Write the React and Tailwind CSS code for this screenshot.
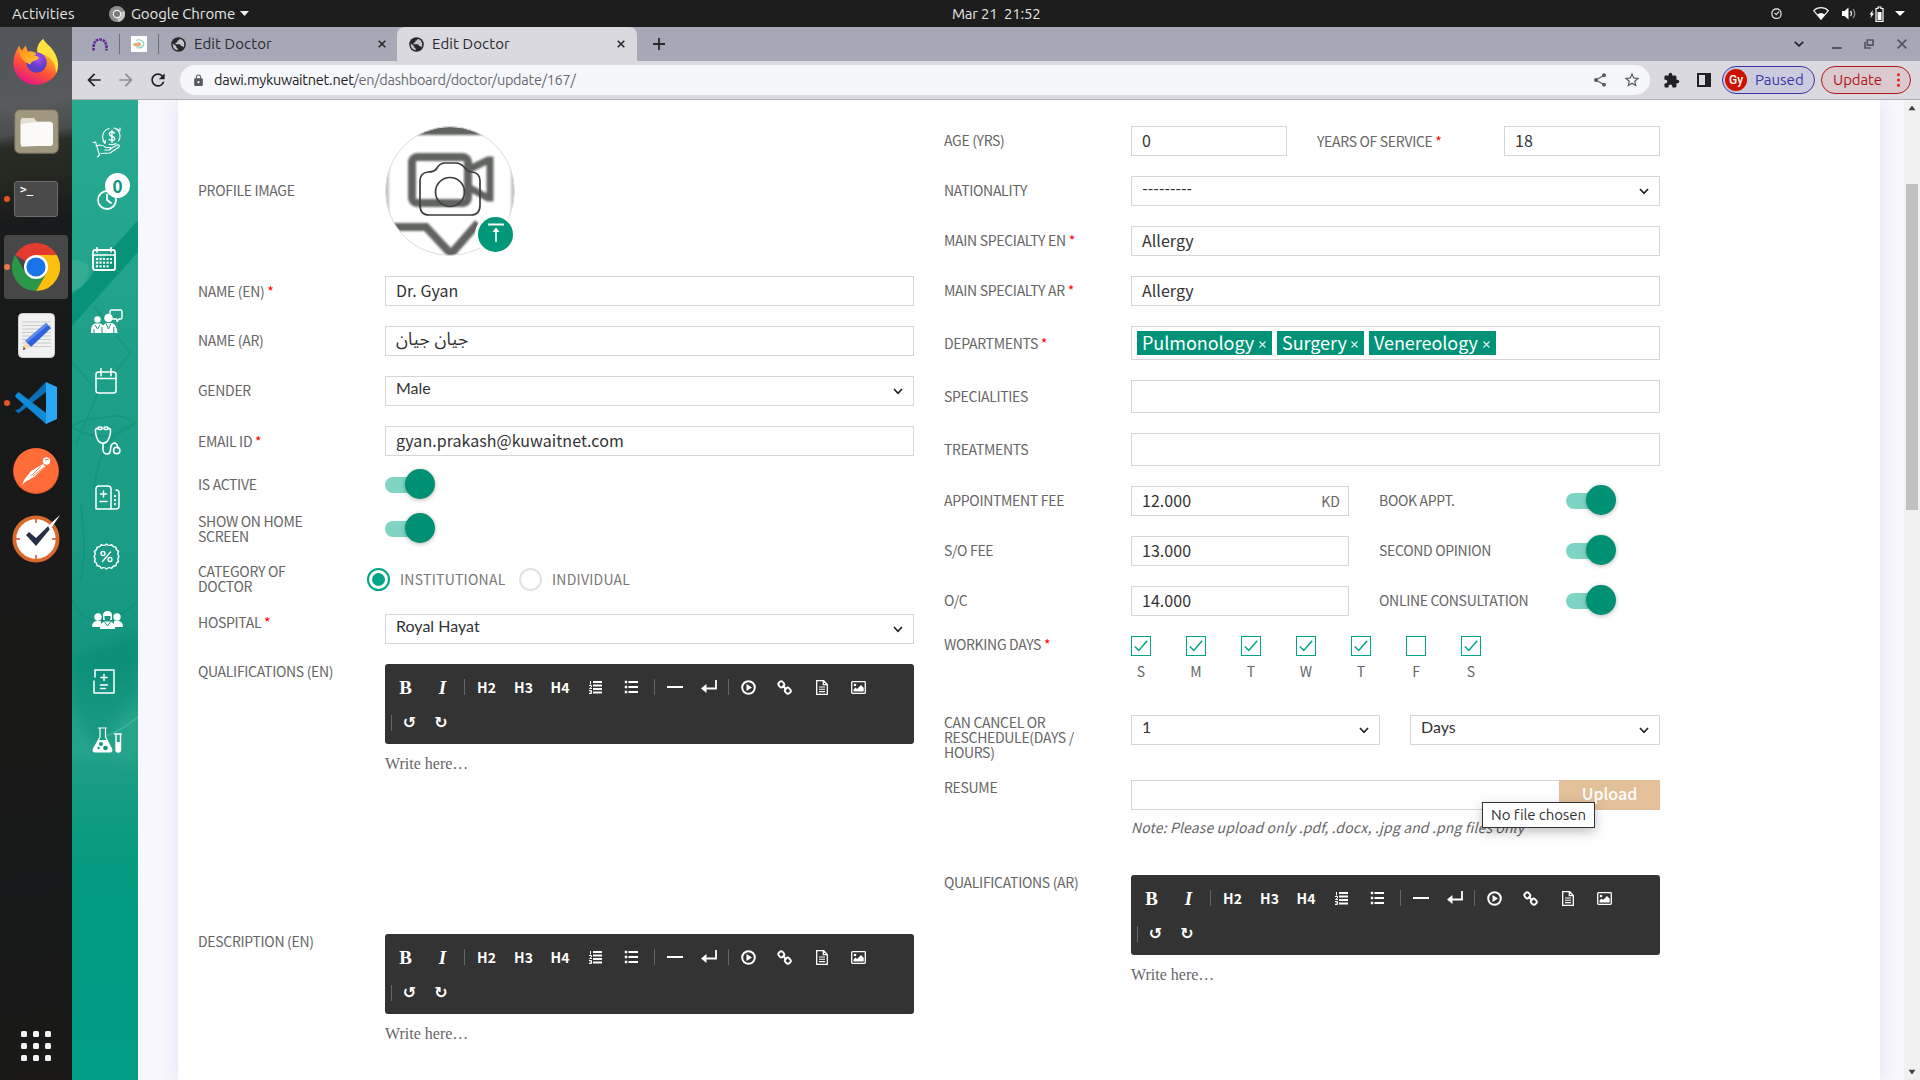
import React from "react";
import { MdArrowBack, MdArrowForward, MdRefresh, MdLock, MdShare, MdStarBorder, MdExtension } from "react-icons/md";

const UI = "font-['Ubuntu','Noto_Sans',sans-serif]";
const FORM = "font-['Source_Sans_Pro','Noto_Sans_CJK_SC',sans-serif]";

/* ---------- desktop top bar ---------- */

function TopBar() {
  return (
    <header className={`${UI} flex h-[27px] items-center bg-[#1d1d1d] text-[15px] leading-[27px] text-[#e6e6e6]`}>
      <span className="ml-3 w-[97px] tracking-[0.1px]">Activities</span>
      <svg className="size-4" viewBox="0 0 16 16">
        <circle cx="8" cy="8" r="8" fill="#8d8d8d" />
        <path d="M8 8 15.5 5A8 8 0 0 1 9 16Z" fill="#c4c4c4" />
        <circle cx="8" cy="8" r="4.2" fill="#f1f1f1" />
        <circle cx="8" cy="8" r="3" fill="#777" />
      </svg>
      <span className="ml-1.5 w-[109px] whitespace-nowrap tracking-[-0.08px]">Google Chrome</span>
      <svg className="h-[5px] w-[9px]" viewBox="0 0 9 5"><path d="M0 0h9L4.500 5z" fill="#eee" /></svg>
      <span className="ml-[703px] whitespace-pre tracking-[-0.2px]">Mar 21  21:52</span>
      <div className="ml-auto flex items-center pr-[15px]">
        <svg className="mr-[31px] size-[11px]" viewBox="0 0 11 11" fill="none" stroke="#d6d6d6"><rect x="1" y="1" width="9" height="9.500" rx="4" strokeWidth="1.300" /><path d="m3.500 5 1.800 1.600L8 3.500" strokeWidth="1.200" /></svg>
        <svg className="mr-[12px] h-[13px] w-4" viewBox="0 0 16 13"><path d="M8 .7c3 0 5.500 1.100 7.300 2.900L8 12.300.7 3.600C2.500 1.800 5 .7 8 .7Z" fill="none" stroke="#eee" strokeWidth="1.200" /><path d="M4.200 7.500a6 6 0 0 1 7.600 0L8 12.300z" fill="#fff" /></svg>
        <svg className="mr-[12px] h-[13px] w-4" viewBox="0 0 16 13"><path d="M1 4h2.500L7.500.500v12L3.500 9H1z" fill="#fff" /><path d="M9.500 4q2 2.500 0 5" fill="none" stroke="#eee" strokeWidth="1.300" /><path d="M12 2q3.600 4.500 0 9" fill="none" stroke="#999" strokeWidth="1.200" /></svg>
        <svg className="mr-[11px] h-4 w-[15px]" viewBox="0 0 15 16"><path d="M4 4 .5 8.500h1.800L1.500 12 5 7.500H3.200z" fill="#fff" /><path d="M7 2.500h2V1h3v1.500h2v12.800H7z" fill="none" stroke="#fff" strokeWidth="1.200" /><path d="M8.500 6h4v8h-4z" fill="#fff" /></svg>
        <svg className="h-[5px] w-[10px]" viewBox="0 0 10 5"><path d="M0 0h10L5 5z" fill="#fff" /></svg>
      </div>
    </header>
  );
}

/* ---------- dock ---------- */

const FirefoxIcon = () => (
  <svg className="-mt-1 size-[47px]" viewBox="0 0 48 48">
    <defs>
      <linearGradient id="fxBody" x1=".8" y1="0" x2=".3" y2="1"><stop offset="0" stopColor="#fff14f" /><stop offset=".35" stopColor="#ffa22a" /><stop offset=".65" stopColor="#ff5136" /><stop offset="1" stopColor="#e2128c" /></linearGradient>
      <radialGradient id="fxCore" cx=".6" cy=".3"><stop offset="0" stopColor="#a94df0" /><stop offset="1" stopColor="#5b3ec4" /></radialGradient>
      <linearGradient id="fxHead" x1="0" y1="0" x2="1" y2="1"><stop offset="0" stopColor="#ff8a16" /><stop offset="1" stopColor="#ffc53a" /></linearGradient>
    </defs>
    <path d="M31 1c2 5 6 6 10 12 8 12 6 24-3 30-9 7-22 6-30-1C-1 34-1 23 3 14l3-6 3 5 4-5 2 6 10 1c-1-6 2-11 6-14Z" fill="url(#fxBody)" />
    <path d="M31 1c2 5 6 6 10 12 6 9 6 17 3 23 0-9-4-15-10-18-4-2-9-3-9-3-1-6 2-11 6-14Z" fill="#ffe23d" />
    <circle cx="24" cy="25" r="10.500" fill="url(#fxCore)" />
    <path d="M6 9l3 4 4-5 2 6c4-1 7 0 9 3l-3 1c4 0 6 1 5 3-2 3-8 2-8 6-5-1-12-6-12-18Z" fill="url(#fxHead)" />
  </svg>
);

const FilesIcon = () => (
  <svg className="h-[45px] w-[45px]" viewBox="0 0 45 45">
    <rect x=".7" y=".7" width="43.600" height="43.600" rx="5" fill="#a0977f" stroke="#6d6757" />
    <path d="M7 38V11q0-2 2-2h10l3 3.500h14q2 0 2 2V36z" fill="#e0dccf" />
    <rect x="6.500" y="13" width="32.500" height="24" rx="3" fill="#fbfaf9" />
    <path d="M6.500 15V12q0-3 3-3H20l3 4z" fill="#e3ded3" />
  </svg>
);

const ChromeIcon = () => (
  <svg className="size-[48px]" viewBox="0 0 48 48">
    <path d="M24 24 3.200 12A24 24 0 0 1 44.800 12Z" fill="#e33b2e" />
    <path d="M24 12H44.800A24 24 0 0 1 24 48L34.400 30Z" fill="#fdbf0d" />
    <path d="M13.600 30 3.200 12A24 24 0 0 0 24 48L34.400 30Z" fill="#2a9848" />
    <circle cx="24" cy="24" r="12" fill="#fff" /><circle cx="24" cy="24" r="9.600" fill="#1a73e8" />
  </svg>
);

const EditorIcon = () => (
  <svg className="h-[45px] w-[37px]" viewBox="0 0 37 45">
    <rect x=".5" y=".5" width="36" height="44" rx="4" fill="#f1f1f1" stroke="#d0d0d0" />
    <path d="M4 9h29M4 12.500h29M4 16h29M4 19.500h29M4 23h29M4 26.500h29M4 30h29M4 33.500h29" stroke="#c9c9c9" />
    <path d="m7 28 21-18 5 5-20 19z" fill="#2f62d9" /><path d="m7 28 21-18 2 2L9 30z" fill="#5c8af0" />
    <path d="m7 28-2 9 8-3z" fill="#f8d8ad" /><path d="m5.700 34-.7 3 2.600-1z" fill="#333" />
  </svg>
);

const CodeIcon = () => (
  <svg className="size-[42px]" viewBox="0 0 42 42">
    <path d="m0 28 3.500 3.500L31 10V0L4 27z" fill="#0b6fb8" />
    <path d="M0 13.500 3.500 10 31 31v11L1 15.500z" fill="#0e8ad6" />
    <path d="M31 0 42 5v32l-11 5z" fill="#2aa7f3" />
  </svg>
);

const PostmanIcon = () => (
  <svg className="size-[46px]" viewBox="0 0 46 46">
    <circle cx="23" cy="23" r="23" fill="#e4582a" /><circle cx="23" cy="22.500" r="22.300" fill="#ff6c37" />
    <circle cx="33.500" cy="13" r="3.700" fill="#fff" /><path d="m32 12 4-1" stroke="#ff6c37" />
    <path d="m30 16 2.500 2.500L21 29l-9 5-3 3 2-5 7-9z" fill="#fff" /><path d="m28 18-10 10m13-9L20 28" stroke="#ff6c37" strokeWidth=".8" />
  </svg>
);

const TaskClockIcon = () => (
  <svg className="size-[48px]" viewBox="0 0 48 48">
    <circle cx="24" cy="24" r="23" fill="#fff" stroke="#d9692b" strokeWidth="4" transform="translate(1.400 1.400) scale(.94)" />
    <path d="M24 4v4M24 40v4M4 24h4M40 24h4" stroke="#d14b2b" strokeWidth="1.500" />
    <path d="m14 20 3-3 7 6L47 .5 48 2 24 31z" fill="#272e45" /><path d="m36 11 12-11-10 15z" fill="#fff" />
  </svg>
);

const TerminalIcon = () => (
  <div className="h-[36px] w-[44px] rounded-[3px] border border-[#6b6b6b] bg-[#4a4a4a] pl-[5px] pt-px font-['DejaVu_Sans_Mono',monospace] text-[11px] font-bold leading-[14px] text-white">&gt;_</div>
);

function Dock() {
  const items = [
    [FirefoxIcon, false], [FilesIcon, false], [TerminalIcon, true], [ChromeIcon, true], [EditorIcon, false],
    [CodeIcon, true], [PostmanIcon, false], [TaskClockIcon, false],
  ];
  return (
    <aside className="flex w-[72px] shrink-0 flex-col bg-[linear-gradient(172deg,#515459_0px,#57595b_80px,#4b4d4f_108px,#2a2d26_120px,#23261f_160px,#191a1b_195px,#171818_420px,#191917_700px,#17191a_850px,#1a1917_1053px)] pt-0.5">
      {items.map(([Icon, running], i) => (
        <div key={i} className="flex h-[68px] items-center">
          <span className={running ? "ml-1 -mr-1 size-1.5 shrink-0 rounded-full bg-[#e95420]" : "ml-1 -mr-1 size-1.5 shrink-0"} />
          <div className={i === 3 ? "-ml-0.5 flex size-16 items-center justify-center rounded-[4px] bg-white/20" : "-ml-0.5 flex size-16 items-center justify-center"}><Icon /></div>
        </div>
      ))}
      <div className="mx-auto mb-[19px] mt-auto grid grid-cols-3 gap-1.5">
        {Array.from({ length: 9 }, (_, i) => <span key={i} className="size-1.5 rounded-[1.500px] bg-[#f2f2f2]" />)}
      </div>
    </aside>
  );
}

/* ---------- browser chrome ---------- */

const X = ({ className = "" }) => <svg className={`size-2 ${className}`} viewBox="0 0 8 8"><path d="m.7.700 6.600 6.600M7.300.700.700 7.300" stroke="currentColor" strokeWidth="1.600" /></svg>;

const Globe = () => (
  <svg className="size-[15px]" viewBox="0 0 15 15">
    <circle cx="7.500" cy="7.500" r="7.300" fill="currentColor" />
    <path d="M8.800 1.700Q8.500 3.500 6.600 3.600L6.200 5.200 4.500 6v1.300h4.200q1.200.2 1.200 1.600h1.300l1.200 1.700Q13.900 8.500 13 5.500 11.800 2.500 8.800 1.700ZM1.700 6.500Q1.200 12 6.700 13.300v-1.600l-1.500-1.500V9.300z" fill="currentColor" className="text-[#c4c4ce]" />
  </svg>
);

function TabStrip() {
  return (
    <div className="flex h-[34px] items-center bg-[#a6a8b8] text-[#27282c]">
      <svg className="ml-5 h-[13px] w-4" viewBox="0 0 16 13"><path d="M1.500 12.500v-3Q2 1.500 8 1.500t6.500 8v3" fill="none" stroke="#5f2b96" strokeWidth="2.600" strokeDasharray="2.600 .8" /></svg>
      <span className="ml-[11px] h-5 w-px bg-[#6c6e7a]" />
      <svg className="ml-[11px] size-4" viewBox="0 0 16 16"><path d="M0 0h16v16H0z" fill="#fff" /><path d="M5 4.500Q8 2.800 11 5t1 5q-2.500 3-6.500 1.500" fill="none" stroke="#7fd6c4" strokeWidth="1.200" /><path d="M1.500 8.500Q3 6.500 5.500 7 8 5.500 10 7.500q.5 2.500-2 3-3.500 1-6.500-2Z" fill="#e0ad7c" /></svg>
      <span className="ml-[11px] h-5 w-px bg-[#6c6e7a]" />
      <div className="flex w-[238px] items-center pl-[12px]">
        <Globe />
        <span className="ml-[8px] text-[15px] tracking-[0.1px]">Edit Doctor</span>
        <X className="ml-auto mr-[11px]" />
      </div>
      <div className="flex h-[34px] w-[240px] items-center rounded-t-lg bg-[#dad9e0] pl-3">
        <Globe />
        <span className="ml-[8px] text-[15px] tracking-[0.1px]">Edit Doctor</span>
        <X className="ml-auto mr-3" />
      </div>
      <svg className="ml-4 size-3" viewBox="0 0 12 12"><path d="M6 0v12M0 6h12" stroke="currentColor" strokeWidth="1.800" /></svg>
      <svg className="ml-auto mr-[28px] h-[6px] w-[10px]" viewBox="0 0 10 6"><path d="m.8.800 4.200 4 4.200-4" fill="none" stroke="currentColor" strokeWidth="1.800" /></svg>
      <span className="mr-[22px] mt-2 h-0.5 w-2.5 bg-[#55565f]" />
      <svg className="mr-[23px] size-2.5" viewBox="0 0 10 10" fill="none" stroke="#55565f" strokeWidth="1.700"><path d="M3.300 1h5.700v5.200H3.300z" /><path d="M1 3v6h6" /></svg>
      <svg className="mr-[13px] size-2.5" viewBox="0 0 10 10"><path d="m.7.700 8.600 8.600M9.300.700.700 9.300" stroke="#55565f" strokeWidth="1.800" /></svg>
    </div>
  );
}

function Toolbar() {
  return (
    <div className="flex h-[39px] items-center border-b border-[#afafb4] bg-[#dad9e0] text-[#202124]">
      <MdArrowBack className="ml-3 size-5" />
      <MdArrowForward className="ml-3 size-5 text-[#8c8c92]" />
      <MdRefresh className="ml-3 size-5" />
      <div className="ml-3 flex h-[30px] w-[1470px] items-center rounded-full bg-[#f6f7fa] pl-3 pr-[9px]">
        <MdLock className="size-[13px] text-[#55585e]" />
        <span className="ml-[9px] text-[14.5px] tracking-[-0.27px] text-[#202124]">dawi.mykuwaitnet.net<span className="text-[#666a70]">/en/dashboard/doctor/update/167/</span></span>
        <MdShare className="ml-auto size-4 text-[#55585e]" />
        <MdStarBorder className="ml-[15px] size-[18px] text-[#55585e]" />
      </div>
      <MdExtension className="ml-[13px] size-[17px]" />
      <svg className="ml-[17px] size-3.5 shrink-0" viewBox="0 0 14 14"><path d="M0 0h14v14H0z" fill="#202124" /><path d="M2 2h6v10H2z" fill="#dad9e0" /></svg>
      <div className="ml-[11px] flex h-7 w-[93px] items-center rounded-full border border-[#3c35a8] bg-[#cacbdc] pl-0.5 text-[15px] text-[#3c35a8]">
        <span className="flex size-[22px] items-center justify-center rounded-full bg-[#cc1100] font-['Roboto',sans-serif] text-[12px] font-medium text-white">Gy</span>
        <span className="ml-2">Paused</span>
      </div>
      <div className="ml-1.5 flex h-7 w-[90px] items-center rounded-full border border-[#b3151b] bg-[#dac9cd] pl-[11px] text-[15px] text-[#b3151b]">
        <span className="tracking-[-0.1px]">Update</span>
        <svg className="ml-auto mr-[10px] h-[14px] w-[3px]" viewBox="0 0 3 14" fill="#e8201a"><circle cx="1.500" cy="1.700" r="1.500" /><circle cx="1.500" cy="7" r="1.500" /><circle cx="1.500" cy="12.300" r="1.500" /></svg>
      </div>
    </div>
  );
}

/* ---------- application sidebar ---------- */

const line = { fill: "none", stroke: "#fff", strokeWidth: 1.5, strokeLinecap: "round", strokeLinejoin: "round" };

const MoneyHand = () => (
  <svg className="h-[31px] w-[30px]" viewBox="0 0 30 31" {...line} strokeWidth="1.100">
    <path d="M13 15.500A8.500 8.500 0 0 1 17 1.500M22 1A8.500 8.500 0 0 1 26.500 14M24 16.500a8.500 8.500 0 0 1-7 .8" /><path d="m25 2 3 2v-3M11 14l2 2.500.5-3" />
    <path d="M22.500 6Q21 4.700 19 5q-2 .5-1.500 2.300Q18 9 20.300 9.500t2.400 2.300q-.4 1.900-2.500 1.800-2 0-3-1.200M20 3.500v12" strokeWidth="1.400" />
    <path d="m1 15.500 2.500-.5 4 13-2 2M4 19l4-1q3 0 6 2.500h4q2 1.500-.5 2.500H13M18 22l7-4q3-.5 2 2l-9 6-9 .5" />
  </svg>
);
const Clock = () => (
  <div className="relative size-5">
    <svg className="size-5" viewBox="0 0 20 20" {...line} strokeWidth="1.800"><circle cx="10" cy="10" r="9" /><path d="M10 4.500V10l4 3" /></svg>
    <span className="absolute -top-[17px] left-2 flex size-[25px] items-center justify-center rounded-full bg-white font-['Noto_Sans_CJK_SC',sans-serif] text-[17px] font-bold leading-none text-[#06957c]">0</span>
  </div>
);
const CalendarGrid = () => (
  <svg className="size-6" viewBox="0 0 24 24" {...line}><rect x="1" y="3" width="22" height="20" rx="2" strokeWidth="1.800" /><path d="M1 8h22M5 .8v4M19 .8v4" strokeWidth="1.700" /><path d="M4 12h16M4 15.700h16M4 19.300h13" strokeWidth="2.200" strokeDasharray="2.200 1.300" strokeLinecap="butt" /></svg>
);
const PeopleChat = () => (
  <svg className="h-6 w-8" viewBox="0 0 32 24"><path d="M19 5V2.500Q19 1 20.500 1h9Q31 1 31 2.500v6q0 1.500-1.500 1.500H28l-2 2.500-.5-2.500H22" {...line} strokeWidth="1.400" /><circle cx="6.500" cy="10.500" r="3.200" fill="#fff" /><circle cx="17.500" cy="9" r="4.300" fill="#fff" /><path d="M0 24q-.5-8.500 4-9.500h5q2 0 3 2l3-2.500h6q4.500 1 5.500 10z" fill="#fff" /><path d="m4 16 2.500 4L9 16M15 14.500l2.500 5.500 2.500-5.500M11 18v6M3 20v4M22.800 18v6" stroke="#1a9a84" fill="none" /></svg>
);
const CalendarPlain = () => (
  <svg className="h-[26px] w-[22px]" viewBox="0 0 22 26" {...line}><rect x="1" y="4" width="20" height="21" rx="2.500" /><path d="M1 10.500h20M6 .8v7M16 .8v7" /></svg>
);
const Stethoscope = () => (
  <svg className="h-[29px] w-[27px]" viewBox="0 0 27 29" {...line} strokeWidth="1.600"><rect x="4" y="1" width="4" height="2.500" rx="1" /><rect x="10" y="1" width="4" height="2.500" rx="1" /><path d="M4 2.200Q1 2 1.500 6q.8 7 4 10 3.500 2.500 7 0 3.200-3 4-10 .3-4-2.500-3.800M9 17.500V24q.5 4 4 4 3.700 0 3.500-5 .5-6 4-6 3 .5 3.200 5" /><circle cx="22.700" cy="24.500" r="3.200" /></svg>
);
const HospitalDoc = () => (
  <svg className="size-[25px]" viewBox="0 0 25 25" {...line}><path d="M1 24V4q0-3 3-3h9q3 0 3 3v20zM21 5q3 0 3 3v13q0 3-3 3h-5M8.500 6v6M5.500 9h6M5 16.500h7" /><path d="M20 11v9" strokeWidth="2.200" strokeDasharray=".2 3.800" /></svg>
);
const Percent = () => (
  <svg className="size-[27px]" viewBox="0 0 27 27" {...line} strokeWidth="1.300"><path d="M13.500 1Q15.700 3.500 18.700 1.600 19.900 4.500 23 4.200 22.800 7.300 25.600 8.300 23.800 11 26 13.500 23.800 16 25.600 18.700 22.800 19.700 23 22.800 19.900 22.500 18.700 25.400 15.700 23.500 13.500 26 11.300 23.500 8.300 25.400 7.100 22.500 4 22.800 4.200 19.700 1.400 18.700 3.200 16 1 13.500 3.200 11 1.400 8.300 4.200 7.300 4 4.200 7.100 4.500 8.300 1.600 11.300 3.500 13.500 1Z" /><circle cx="10" cy="10.500" r="2" /><circle cx="17" cy="16.500" r="2" /><path d="m17.500 9-8 9.500" /></svg>
);
const Group = () => (
  <svg className="h-[18px] w-[31px]" viewBox="0 0 31 18"><circle cx="6" cy="6" r="3.700" fill="#fff" /><circle cx="25" cy="6" r="3.700" fill="#fff" /><path d="M0 16q0-5 4-6h5v6zM31 16q0-5-4-6h-5v6z" fill="#fff" /><path d="M11 9V4.500Q11 0 15.500 0T20 4.500V9z" fill="#fff" /><path d="M12.500 5h6v2q-.3 3-3 3t-3-3z" fill="#129580" /><path d="M8 18q0-7 5-7.500h5q5 .5 5 7.500z" fill="#fff" /><path d="m12.500 11 3 4 3-4" stroke="#129580" fill="none" /></svg>
);
const DocPlus = () => (
  <svg className="h-[25px] w-[22px]" viewBox="0 0 22 25" {...line}><path d="M2 8V1h19v23H1V12M11 5.500v6M8 8.500h6M7.500 16h7M7.500 19.500h5" /></svg>
);
const Flask = () => (
  <svg className="h-[26px] w-[30px]" viewBox="0 0 30 26"><path d="M6.500 1h8M8 1.500V10L1.500 22q-1 3 1.500 3h15q2.500 0 1.500-3L13.500 10V1.500" {...line} strokeWidth="1.200" /><path d="M6.500 13h8.500l5 9q.8 3-2 3H3q-2.800 0-2-3z" fill="#fff" /><circle cx="9" cy="17" r="2" fill="#12967e" /><circle cx="13.500" cy="21" r="2.300" fill="#12967e" /><circle cx="6.500" cy="21" r="1.200" fill="#12967e" /><path d="M22.500 7h7.500M24 7.500V23q0 2 2.200 2t2.300-2V7.500" {...line} strokeWidth="1.400" /><path d="M24 15h4.500v8q0 2-2.300 2T24 23z" fill="#fff" /></svg>
);

function AppSidebar() {
  const icons = [
    [MoneyHand, "mt-[27px]"], [Clock, "mt-[32px]"], [CalendarGrid, "mt-[37px] -ml-1.5"], [PeopleChat, "mt-[38px]"], [CalendarPlain, "mt-[35px] -ml-[3px]"],
    [Stethoscope, "mt-[32px]"], [HospitalDoc, "mt-[30px]"], [Percent, "mt-[33px] -ml-0.5"], [Group, "mt-[41px]"], [DocPlus, "mt-[40px] -ml-[7px]"], [Flask, "mt-[33px]"],
  ];
  return (
    <nav className="relative flex w-[66px] shrink-0 flex-col items-center overflow-hidden bg-[linear-gradient(180deg,#29ab93_0px,#25a78f_100px,#1ea188_250px,#1a9b84_450px,#139580_560px,#25a38b_620px,#199d84_680px,#089b81_740px,#029c83_820px,#019d84_980px)]">
      <svg className="absolute left-0 top-0 h-[800px] w-[66px]" viewBox="0 0 66 800">
        <defs><filter id="haze" x="-20%" width="140%"><feGaussianBlur stdDeviation="6" /></filter></defs>
        <path d="M66 120v32L0 226v-35q14-3 24-24z" fill="#018c74" opacity=".75" />
        <path d="M0 160q18 0 17 12T0 194z" fill="#46b59c" opacity=".45" />
        <path d="M0 262 26 292 4 345M22 206l36 47-20 27M0 326q12-8 30-8 20-6 34 5-30 25-64 4M64 323q-36 10-42 66M8 402q8 50 0 80M0 500q18 40 66 2" fill="none" stroke="#0b806b" strokeWidth="1.500" opacity=".3" />
        <g filter="url(#haze)">
          <path d="M0 560 66 530v60L26 646 0 610z" fill="#00856e" opacity=".38" />
          <path d="M0 640q40 20 66-20v50Q30 650 0 662z" fill="#39ad95" opacity=".3" />
        </g>
        <path d="M34 636q18-7 32-19" stroke="#63bfab" strokeWidth="2" opacity=".45" fill="none" />
      </svg>
      {icons.map(([Icon, cls], i) => <div key={i} className={`relative flex w-[30px] shrink-0 translate-x-[2px] justify-center ${cls}`}><span className="shrink-0"><Icon /></span></div>)}
    </nav>
  );
}

/* ---------- form controls ---------- */

const Label = ({ children, req, className = "" }) => (
  <div className={`w-[187px] shrink-0 whitespace-pre text-[14px] leading-[15px] tracking-[-0.31px] text-[#666] ${className}`}>
    {children}{req && <span className="text-[#f00]"> *</span>}
  </div>
);

const Input = ({ children, className = "w-[529px]", tall }) => (
  <div className={`flex shrink-0 items-center border border-[#d6d6d6] bg-white px-2.5 pb-0.5 text-[16px] leading-5 tracking-[0.04px] text-[#333] ${tall || "h-[30px]"} ${className}`}>{children}</div>
);

const Select = ({ children, className = "w-[529px]" }) => (
  <div className={`flex h-[30px] shrink-0 justify-between border border-[#d6d6d6] bg-white pl-2.5 pr-[10px] font-['Lato',sans-serif] text-[16px] leading-[22px] text-[#333] ${className}`}>
    <span>{children}</span>
    <svg className="mt-[11px] h-[7px] w-[10px]" viewBox="0 0 10 7"><path d="m1 1 4 4.300L9 1" fill="none" stroke="#222" strokeWidth="1.700" /></svg>
  </div>
);

const Toggle = ({ className = "" }) => (
  <div className={`relative h-[30px] w-[50px] shrink-0 ${className}`}>
    <div className="mt-2 h-4 w-10 rounded-full bg-[#7fd5c3]" />
    <div className="absolute right-0 top-0 size-[30px] rounded-full bg-[#009073] shadow-[0_1px_4px_rgba(0,0,0,0.3)]" />
  </div>
);

const Row = ({ h, children }) => <div className={`flex items-start ${h}`}>{children}</div>;

const Sep = ({ w }) => <span className={`flex h-4 shrink-0 justify-center ${w}`}><span className="h-4 w-px bg-[#666]" /></span>;
const Btn = ({ w = "w-[37px]", className = "", children }) => <span className={`flex shrink-0 items-center justify-center ${w} ${className}`}>{children}</span>;
const heading = "text-[14px] font-bold leading-none";
const serif = "font-['Liberation_Serif',serif] text-[19px] font-bold leading-none";

const glyph = { className: "h-[14px] w-[15px]", viewBox: "0 0 15 14", fill: "none", stroke: "#fff", strokeWidth: 2 };

function Editor() {
  return (
    <div className="w-[529px]">
      <div className="h-20 rounded-[3px] bg-[#333] pl-0.5 pt-[13px] text-white">
        <div className="flex h-5 items-center">
          <Btn className={serif}>B</Btn><Btn className={`${serif} italic`}>I</Btn><Sep w="w-[7px]" />
          <Btn className={heading}>H2</Btn><Btn className={heading}>H3</Btn><Btn w="w-9" className={heading}>H4</Btn>
          <Btn w="w-[35px]"><svg {...glyph}><path d="M5 2h9M5 5.500h9M5 9h9M5 12.500h9" strokeWidth="1.800" /><path d="M2.500 1v3.500M1 5.500h2.500v1.500L1.500 8.500H4M1 10.500h2.500v3H1M1.500 12h2" strokeWidth="1" /></svg></Btn>
          <Btn><svg {...glyph}><path d="M4.500 2H14M4.500 7H14M4.500 12H14" strokeWidth="2.200" /><path d="M.8 2h2.400M.8 7h2.400M.8 12h2.400" strokeWidth="2.400" /></svg></Btn><Sep w="w-2" />
          <Btn w="w-[34px]"><span className="h-0.5 w-4 bg-white" /></Btn>
          <Btn w="w-[34px]"><svg className="h-3.5 w-4" viewBox="0 0 16 14"><path d="M15 0v8.500H4" fill="none" stroke="#fff" strokeWidth="1.800" /><path d="M5.500 4v9L0 8.500z" fill="#fff" /></svg></Btn>
          <Sep w="w-1" />
          <Btn w="w-9"><svg className="size-[15px]" viewBox="0 0 15 15"><circle cx="7.500" cy="7.500" r="6.300" fill="none" stroke="#fff" strokeWidth="2" /><path d="m5.500 4 5.500 3.500L5.500 11z" fill="#fff" /></svg></Btn>
          <Btn><svg className="size-[15px]" viewBox="0 0 15 15" fill="none" stroke="#fff" strokeWidth="1.900"><rect x="1.700" y="1.500" width="5.200" height="5.800" rx="2.300" transform="rotate(-42 4.300 4.400)" /><rect x="8.200" y="7.800" width="5.200" height="5.800" rx="2.300" transform="rotate(-42 10.800 10.700)" /><path d="m5.500 5.500 4 4.200" /></svg></Btn>
          <Btn><svg className="h-[15px] w-3" viewBox="0 0 12 15" fill="none" stroke="#fff" strokeWidth="1.300"><path d="M.7.700h7l3.600 3.800v9.800H.700zM7.300.700v4h4" /><path d="M3 7h6M3 9.300h6M3 11.600h6" strokeWidth="1.100" /></svg></Btn>
          <Btn><svg className="h-[13px] w-[15px]" viewBox="0 0 15 13"><rect x=".7" y=".7" width="13.600" height="11.600" rx=".8" fill="none" stroke="#fff" strokeWidth="1.300" /><circle cx="4" cy="4" r="1.300" fill="#fff" /><path d="M2.500 10.500V8.500L4.500 6.500 6 8l4-4 2.700 2.700v3.800z" fill="#fff" /></svg></Btn>
        </div>
        <div className="mt-4 flex h-5 items-center font-['DejaVu_Sans',sans-serif] text-[16px] font-bold leading-none">
          <Sep w="w-2" /><Btn w="w-[29px]">↺</Btn><Btn w="w-[34px]">↻</Btn>
        </div>
      </div>
      <p className="mt-2.5 font-['Liberation_Serif',serif] text-[16px] leading-5 text-[#666]">Write here…</p>
    </div>
  );
}

function ProfileImage() {
  return (
    <div className="relative h-[130px] w-[130px]">
      <svg className="size-[130px]" viewBox="0 0 130 130">
        <defs><clipPath id="avatar"><circle cx="65" cy="65" r="64.500" /></clipPath><filter id="soft"><feGaussianBlur stdDeviation="1.300" /></filter></defs>
        <g clipPath="url(#avatar)" fill="none" stroke="#606361">
          <g filter="url(#soft)" strokeWidth="8"><path d="M0 3h130" strokeWidth="12" /><rect x="27" y="31" width="56" height="46" rx="5" /><path d="m85 43 18-9h2v38h-2L85 62" strokeWidth="7" /><path d="M-8 101h49l25 27 27-31" /><path d="M0 20v85M130 20v85" stroke="#c4c4c4" strokeWidth="8" /></g>
          <path d="M43 46q7 0 9-4t7-5h13q5 1 8 5t7 4q8 1 8 9v24q0 10-9 10H44q-9 0-9-10V55q0-8 8-9Z" stroke="#3d3d3d" strokeWidth="1.700" /><circle cx="65" cy="66" r="14.500" stroke="#3d3d3d" strokeWidth="1.700" />
        </g>
        <circle cx="65" cy="65" r="64.400" fill="none" stroke="#dcdcdc" />
      </svg>
      <span className="absolute -right-px bottom-px flex size-[41px] items-center justify-center rounded-full border-[3px] border-white bg-[#009879]">
        <svg className="mb-1 h-[19px] w-4" viewBox="0 0 16 19" stroke="#fff" fill="none"><path d="M0 1.500h16" strokeWidth="2" /><path d="M8 6v13" strokeWidth="1.600" /><path d="M4.500 9 8 4.500 11.500 9z" fill="#fff" stroke="none" /></svg>
      </span>
    </div>
  );
}

function LeftColumn() {
  return (
    <section className="w-[746px] pt-[26px]">
      <Row h="h-[150px]"><Label className="pt-[57px]">PROFILE IMAGE</Label><ProfileImage /></Row>
      <Row h="h-[50px]"><Label req className="pt-2">NAME (EN)</Label><Input>Dr. Gyan</Input></Row>
      <Row h="h-[50px]"><Label className="pt-[7px]">NAME (AR)</Label><Input><span dir="rtl" className="font-['Noto_Sans_Arabic','DejaVu_Sans',sans-serif] text-[17.500px]">جيان جيان</span></Input></Row>
      <Row h="h-[50px]"><Label className="pt-[7px]">GENDER</Label><Select>Male</Select></Row>
      <Row h="h-[43px]"><Label req className="pt-2">EMAIL ID</Label><Input>gyan.prakash@kuwaitnet.com</Input></Row>
      <Row h="h-[44px]"><Label className="pt-2">IS ACTIVE</Label><Toggle /></Row>
      <Row h="h-[51px]"><Label className="pt-px">{"SHOW ON HOME\nSCREEN"}</Label><Toggle /></Row>
      <Row h="h-[50px]">
        <Label className="!w-[169px]">{"CATEGORY OF\nDOCTOR"}</Label>
        <div className="mt-1 flex items-center text-[14px] leading-none tracking-[0.25px] text-[#777]">
          <span className="flex size-[23px] items-center justify-center rounded-full border-2 border-[#00a685]"><span className="size-[13px] rounded-full bg-[#00a685]" /></span>
          <span className="ml-2.5 w-[119px] pb-0.5">INSTITUTIONAL</span>
          <span className="size-[23px] rounded-full border-2 border-[#e3e3e3]" />
          <span className="ml-2.5 pb-0.5">INDIVIDUAL</span>
        </div>
      </Row>
      <Row h="h-[50px]"><Label req className="pt-px">HOSPITAL</Label><Select>Royal Hayat</Select></Row>
      <Row h="h-[270px]"><Label>QUALIFICATIONS (EN)</Label><Editor /></Row>
      <Row h="h-[120px]"><Label>DESCRIPTION (EN)</Label><Editor /></Row>
    </section>
  );
}

function RightColumn() {
  const days = ["S", "M", "T", "W", "T", "F", "S"];
  const fees = [["APPOINTMENT FEE", "12.000", "BOOK APPT.", true], ["S/O FEE", "13.000", "SECOND OPINION"], ["O/C", "14.000", "ONLINE CONSULTATION"]];
  const departments = [["Pulmonology", "w-[135px]"], ["Surgery", "w-[87px]"], ["Venereology", "w-[127px]"]];
  return (
    <section className="w-[716px] pt-[26px]">
      <Row h="h-[50px]"><Label className="pt-[7px]">AGE (YRS)</Label><Input className="w-[156px]">0</Input><Label req className="ml-[30px] pt-2">YEARS OF SERVICE</Label><Input className="w-[156px]">18</Input></Row>
      <Row h="h-[50px]"><Label className="pt-[7px]">NATIONALITY</Label><Select><span className="tracking-[-0.4px]">---------</span></Select></Row>
      <Row h="h-[50px]"><Label req className="pt-[7px]">MAIN SPECIALTY EN</Label><Input>Allergy</Input></Row>
      <Row h="h-[50px]"><Label req className="pt-[7px]">MAIN SPECIALTY AR</Label><Input>Allergy</Input></Row>
      <Row h="h-[54px]">
        <Label req className="pt-2.5">DEPARTMENTS</Label>
        <Input tall="h-[34px]" className="w-[529px] gap-[5px] !px-[5px]">
          {departments.map(([t, w]) => (
            <span key={t} className={`mt-0.5 flex h-6 items-center justify-between bg-[#009378] pl-[5px] pr-1.5 text-[18px] text-white ${w}`}><span className="-mt-[3px] tracking-[-0.05px]">{t}</span><svg className="mt-0.5 size-[7px]" viewBox="0 0 7 7"><path d="m.5.500 6 6m0-6-6 6" stroke="#e5f5f1" strokeWidth="1.100" /></svg></span>
          ))}
        </Input>
      </Row>
      <Row h="h-[53px]"><Label className="pt-[9px]">SPECIALITIES</Label><Input tall="h-[33px]" /></Row>
      <Row h="h-[53px]"><Label className="pt-[9px]">TREATMENTS</Label><Input tall="h-[33px]" /></Row>
      {fees.map(([l, v, r, kd]) => (
        <Row key={l} h="h-[50px]">
          <Label className="pt-[7px]">{l}</Label>
          <Input className="w-[218px] justify-between !pr-2">{v}{kd && <span className="pt-0.5 text-[14px] text-[#666]">KD</span>}</Input>
          <Label className="ml-[30px] pt-[7px]">{r}</Label><Toggle className="-mt-px" />
        </Row>
      ))}
      <Row h="h-[79px]">
        <Label req className="pt-px">WORKING DAYS</Label>
        <div className="flex gap-[35px]">
          {days.map((d, i) => (
            <div key={i} className="flex w-5 flex-col items-center text-[14px] leading-5 text-[#666]">
              <span className="flex size-5 items-center justify-center border border-[#00a685]">{d !== "F" && <svg className="h-3 w-3.5" viewBox="0 0 14 12"><path d="m.8 6.500 4 4L13.200.8" fill="none" stroke="#00a685" strokeWidth="1.500" /></svg>}</span>
              <span className="mt-[5px]">{d}</span>
            </div>
          ))}
        </div>
      </Row>
      <Row h="h-[65px]"><Label>{"CAN CANCEL OR\nRESCHEDULE(DAYS /\nHOURS)"}</Label><Select className="w-[249px]">1</Select><Select className="ml-[30px] w-[250px]">Days</Select></Row>
      <Row h="h-[95px]">
        <Label>RESUME</Label>
        <div className="relative">
          <div className="flex">
            <Input className="w-[428px] !border-r-0" />
            <button className="h-[30px] w-[101px] bg-[#e4c09a] pb-1 text-[16px] font-medium leading-[26px] text-white">Upload</button>
          </div>
          <p className="mt-2 whitespace-nowrap text-[14px] italic leading-[18px] tracking-[0.13px] text-[#666]">Note: Please upload only .pdf, .docx, .jpg and .png files only</p>
          <div className={`${UI} absolute left-[351px] top-[22px] flex h-[26px] w-[113px] items-center justify-center whitespace-nowrap border border-[#333] bg-white text-[15px] tracking-[-0.1px] text-[#333] shadow-[0_4px_12px_rgba(0,0,0,0.25)]`}>No file chosen</div>
        </div>
      </Row>
      <Row h="h-[120px]"><Label>QUALIFICATIONS (AR)</Label><Editor /></Row>
    </section>
  );
}

function Scrollbar() {
  return (
    <div className="flex w-4 shrink-0 flex-col items-center bg-[#f1f1f1]">
      <svg className="mt-1.5 h-1 w-1.5 scale-125" viewBox="0 0 6 4"><path d="M3 0l3 4H0z" fill="#444" /></svg>
      <div className="mt-[74px] h-[326px] w-3 bg-[#c1c1c1]" />
      <svg className="mb-1.5 mt-auto h-1 w-1.5 scale-125" viewBox="0 0 6 4"><path d="M0 0h6L3 4z" fill="#444" /></svg>
    </div>
  );
}

export default function App() {
  return (
    <div className="flex h-[1080px] w-[1920px] flex-col overflow-hidden bg-white">
      <TopBar />
      <div className="flex h-[1053px]">
        <Dock />
        <div className={`${UI} flex w-[1848px] flex-col`}>
          <TabStrip />
          <Toolbar />
          <div className={`${FORM} flex h-[980px]`}>
            <AppSidebar />
            <main className="flex flex-1 overflow-hidden bg-[#f8f7fd] pl-10 pr-6">
              <div className="flex w-[1702px] bg-white pl-5 shadow-[0_0_18px_rgba(90,80,200,0.14)]">
                <LeftColumn />
                <RightColumn />
              </div>
            </main>
            <Scrollbar />
          </div>
        </div>
      </div>
    </div>
  );
}
